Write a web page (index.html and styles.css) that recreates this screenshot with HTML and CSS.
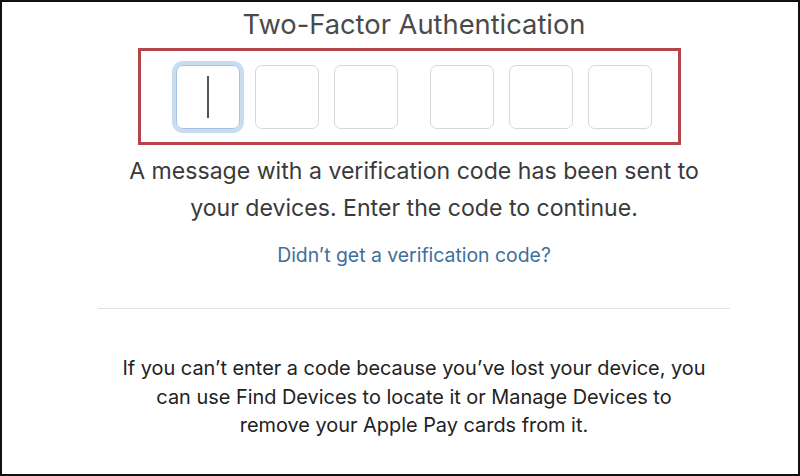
FILE: index.html
```html
<!DOCTYPE html>
<html>
	<head>
		<meta charset="utf-8" />
		<title>Two-Factor Authentication</title>
		<link rel="stylesheet" href="styles.css">
	</head>
	<body>
		<div class="frame">
			<div class="content">
				<h1 class="title">Two-Factor Authentication</h1>

				<div class="code-box">
					<div class="digit focus"><span class="caret"></span></div>
					<div class="digit"></div>
					<div class="digit split"></div>
					<div class="digit"></div>
					<div class="digit"></div>
					<div class="digit"></div>
				</div>

				<p class="message">A message with a verification code has been sent to<br>your devices. Enter the code to continue.</p>

				<a href="#" class="resend">Didn’t get a verification code?</a>

				<div class="divider"></div>

				<p class="note">If you can’t enter a code because you’ve lost your device, you<br>can use Find Devices to locate it or Manage Devices to<br>remove your Apple Pay cards from it.</p>
			</div>
		</div>
	</body>
</html>
```

FILE: styles.css
```css
*{
	margin: 0;
	padding: 0;
	box-sizing: border-box;
	text-decoration: none;
}
body{
	background: #fff;
	font-family: Inter, "Liberation Sans", sans-serif;
}
.frame{
	width: 800px;
	height: 476px;
	border: 2px solid #111;
	overflow: hidden;
}
.content{
	width: 632px;
	margin-left: 96px;
	display: flex;
	flex-direction: column;
	align-items: center;
	text-align: center;
}
.title{
	margin-top: 6px;
	font-size: 27.3px;
	font-weight: 400;
	line-height: 34px;
	color: #4a4a4a;
}
.code-box{
	align-self: flex-start;
	margin: 6px 0 0 40px;
	width: 543px;
	height: 97px;
	border: 3px solid #b5454a;
	padding-left: 35px;
	display: flex;
	align-items: center;
	gap: 15px;
}
.digit{
	width: 64px;
	height: 64px;
	border: 1.5px solid #d8d8d8;
	border-radius: 7px;
	display: flex;
	align-items: center;
	justify-content: center;
}
.digit.split{
	margin-right: 17px;
}
.digit.focus{
	border-color: #a3c2e4;
	box-shadow: 0 0 0 4px #cadcf0;
}
.caret{
	width: 2px;
	height: 42px;
	background: #555;
}
.message{
	margin-top: 8px;
	font-size: 23.1px;
	line-height: 37px;
	color: #3a3a3a;
}
.resend{
	margin-top: 15px;
	font-size: 19.4px;
	line-height: 26px;
	color: #3d6f9c;
}
.divider{
	align-self: stretch;
	margin-top: 40px;
	height: 1px;
	background: #e2e2e2;
}
.note{
	margin-top: 45px;
	font-size: 19.9px;
	line-height: 28.5px;
	color: #222;
}
```
